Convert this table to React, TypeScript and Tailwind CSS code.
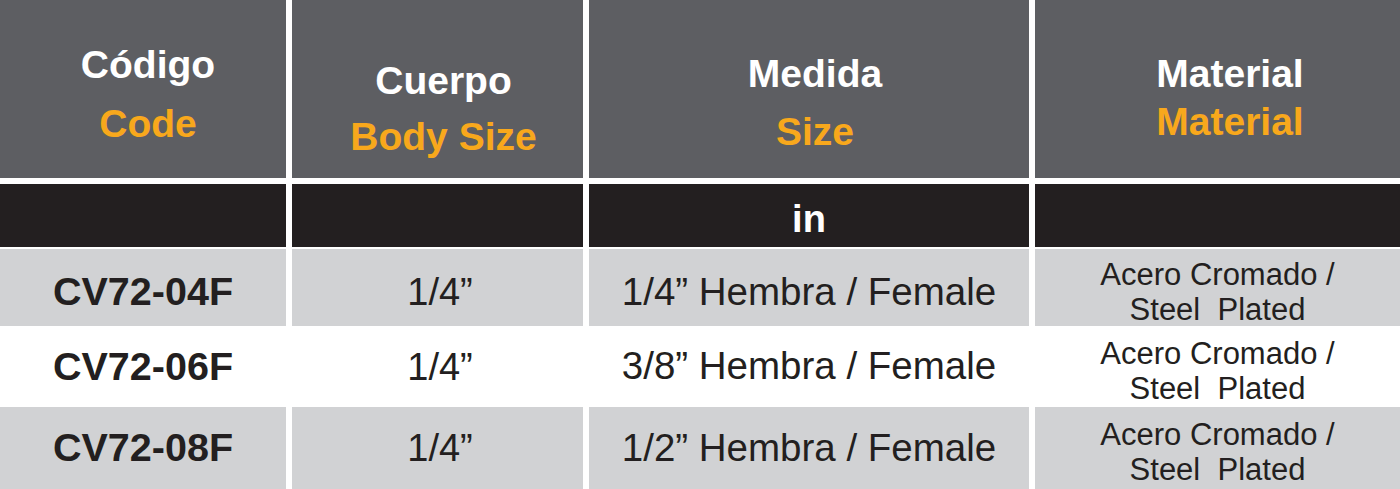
import React from 'react';

const rows = [
  { code: 'CV72-04F', body: '1/4\u201d', size: '1/4\u201d Hembra / Female', bg: 'bg-[#d1d2d4]', h: 'h-[77px]', shift: 'pt-[8px]', matShift: 'pt-[8px]' },
  { code: 'CV72-06F', body: '1/4\u201d', size: '3/8\u201d Hembra / Female', bg: 'bg-white', h: 'h-[81px]', shift: 'pt-0', matShift: 'pt-[9px]' },
  { code: 'CV72-08F', body: '1/4\u201d', size: '1/2\u201d Hembra / Female', bg: 'bg-[#d1d2d4]', h: 'h-[82px]', shift: 'pt-0', matShift: 'pt-[8px]' },
];

const cols = 'grid grid-cols-[286px_291px_440px_365px] gap-x-[6px]';

export default function App() {
  return (
    <div className="w-[1400px] h-[489px] overflow-hidden bg-white font-['Liberation_Sans',Arial,sans-serif] text-[#231f20]">
      {/* Encabezado */}
      <div className={`${cols} h-[178px] font-bold text-[39px] leading-none`}>
        <div className="bg-[#5d5e62] flex flex-col items-center pt-[45px] pl-[10px]">
          <span className="text-white">Código</span>
          <span className="text-[#f8a81c] mt-[20px]">Code</span>
        </div>
        <div className="bg-[#5d5e62] flex flex-col items-center pt-[61px] pl-[12px]">
          <span className="text-white">Cuerpo</span>
          <span className="text-[#f8a81c] mt-[17px]">Body Size</span>
        </div>
        <div className="bg-[#5d5e62] flex flex-col items-center pt-[54px] pl-[12px]">
          <span className="text-white">Medida</span>
          <span className="text-[#f8a81c] mt-[19px]">Size</span>
        </div>
        <div className="bg-[#5d5e62] flex flex-col items-center pt-[54px] pl-[25px]">
          <span className="text-white">Material</span>
          <span className="text-[#f8a81c] mt-[9px]">Material</span>
        </div>
      </div>

      {/* Unidades */}
      <div className={`${cols} h-[63px] mt-[6px]`}>
        <div className="bg-[#231f20]" />
        <div className="bg-[#231f20]" />
        <div className="bg-[#231f20] flex items-center justify-center pt-[6px]">
          <span className="text-white font-bold text-[38px] leading-none">in</span>
        </div>
        <div className="bg-[#231f20]" />
      </div>

      {/* Filas */}
      <div className="mt-[2px]">
        {rows.map((r) => (
          <div key={r.code} className={`${cols} ${r.h}`}>
            <div className={`${r.bg} ${r.shift} flex items-center justify-center font-bold text-[39.5px] leading-none`}>
              {r.code}
            </div>
            <div className={`${r.bg} ${r.shift} flex items-center justify-center text-[38px] leading-none pl-[5px]`}>
              {r.body}
            </div>
            <div className={`${r.bg} ${r.shift} flex items-center justify-center text-[38.5px] leading-none`}>
              {r.size}
            </div>
            <div className={`${r.bg} ${r.matShift} flex flex-col items-center justify-center text-[31px] leading-[35px]`}>
              <span>Acero Cromado /</span>
              <span className="whitespace-pre">Steel  Plated</span>
            </div>
          </div>
        ))}
      </div>
    </div>
  );
}
